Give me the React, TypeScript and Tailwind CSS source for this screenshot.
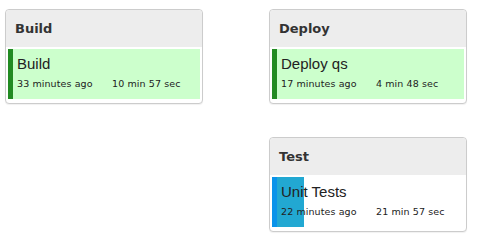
import React from 'react'

type Job = {
  name: string
  ago: string
  took: string
  state: 'ok' | 'running'
  progress?: number
}

type Stage = { title: string; jobs: Job[] }

const build: Stage = { title: 'Build', jobs: [{ name: 'Build', ago: '33 minutes ago', took: '10 min 57 sec', state: 'ok' }] }
const deploy: Stage = { title: 'Deploy', jobs: [{ name: 'Deploy qs', ago: '17 minutes ago', took: '4 min 48 sec', state: 'ok' }] }
const test: Stage = {
  title: 'Test',
  jobs: [{ name: 'Unit Tests', ago: '22 minutes ago', took: '21 min 57 sec', state: 'running', progress: 32 }],
}

function JobRow({ job }: { job: Job }) {
  const ok = job.state === 'ok'
  return (
    <div className={`relative mx-[2px] mt-[2px] mb-[4px] h-[50px] flex ${ok ? 'bg-[#ccffcc]' : 'bg-white'}`}>
      {!ok && (
        <div className="absolute left-0 top-0 bottom-0 flex" style={{ width: `${job.progress}px` }}>
          <div className="w-[5px] bg-[#0a93ea]" />
          <div className="flex-1 bg-[#22a8d2]" />
        </div>
      )}
      <div className={`w-[5px] shrink-0 ${ok ? 'bg-[#228b22]' : ''}`} />
      <div className="relative pl-[4px] pt-[6px] text-[#222]">
        <div className="text-[15px] leading-[18px] font-['Liberation_Sans',Arial,sans-serif] font-light">{job.name}</div>
        <div className="mt-[5px] flex text-[9.5px] leading-[12px] tracking-[0.1px] font-['DejaVu_Sans',Verdana,sans-serif]">
          <span className="w-[95px] shrink-0">{job.ago}</span>
          <span>{job.took}</span>
        </div>
      </div>
    </div>
  )
}

function StageCard({ stage }: { stage: Stage }) {
  return (
    <div className="w-[198px] rounded-[4px] border border-[#cccccc] bg-white shadow-[0_1px_1px_rgba(0,0,0,0.06)]">
      <div className="h-[37px] rounded-t-[4px] bg-[#ededed] pl-[9px] flex items-center text-[13px] font-bold text-[#333] font-['DejaVu_Sans',Verdana,sans-serif]">
        {stage.title}
      </div>
      {stage.jobs.map((j) => (
        <JobRow key={j.name} job={j} />
      ))}
    </div>
  )
}

export default function App() {
  return (
    <div className="w-[492px] h-[250px] bg-white pl-[5px] pt-[9px] flex items-start">
      <StageCard stage={build} />
      <div className="ml-[66px] flex flex-col gap-[33px]">
        <StageCard stage={deploy} />
        <StageCard stage={test} />
      </div>
    </div>
  )
}
